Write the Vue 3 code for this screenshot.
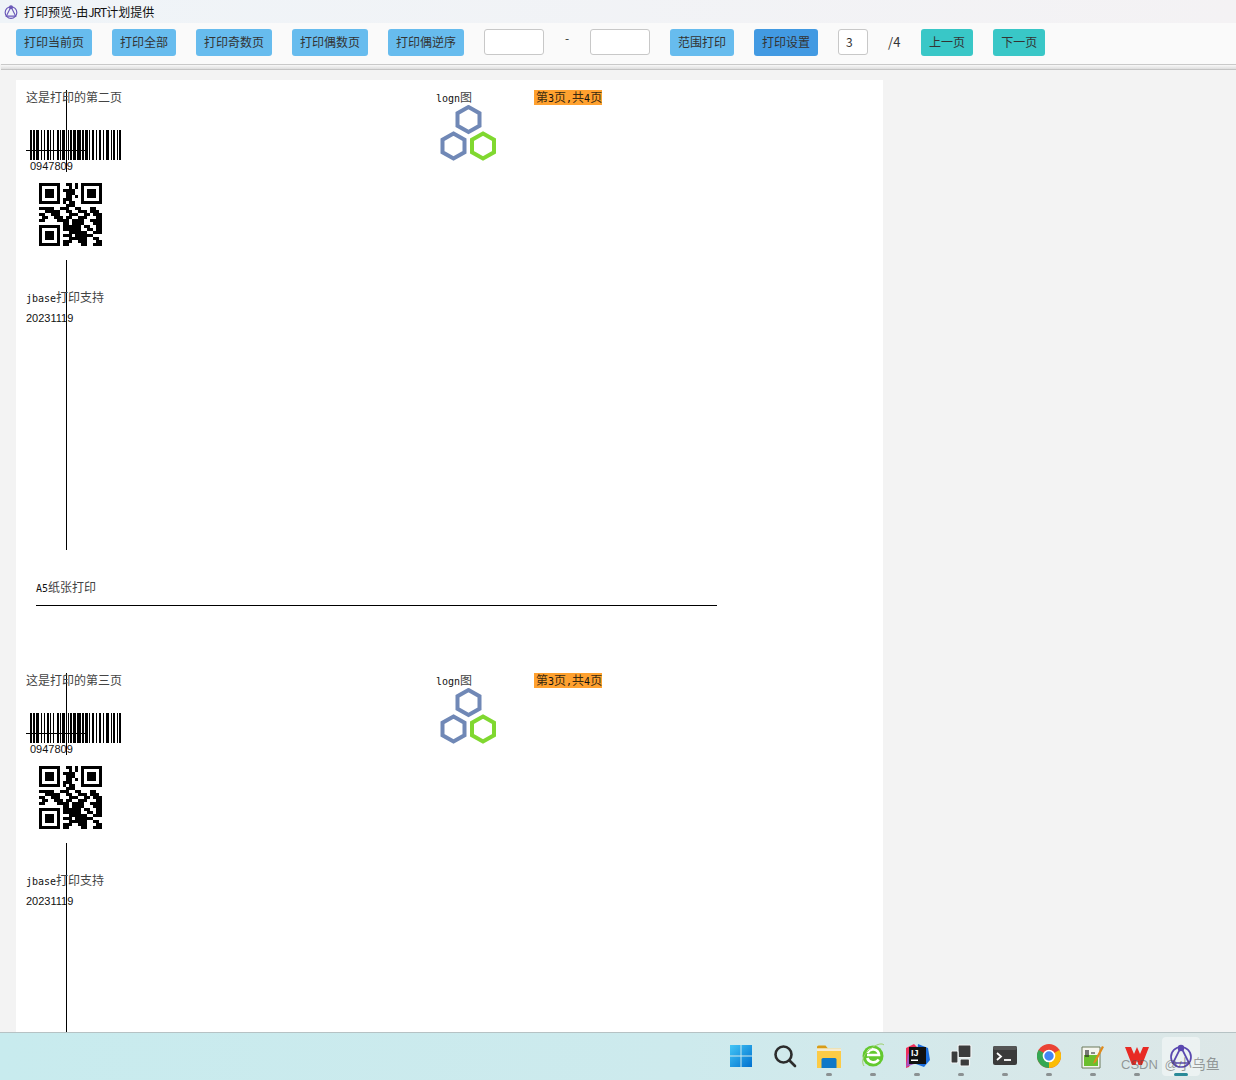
<script setup>
const sheets = [
  { title: '这是打印的第二页', footer: true },
  { title: '这是打印的第三页', footer: false }
]
const barSpec = [[30,2],[33,2],[36,3],[41,1],[44,1],[47,2],[50,1],[53,1],[57,2],[60,1],[62,3],[66,1],[68,1],[70,2],[73,3],[77,4],[82,2],[85,3],[89,1],[92,2],[96,1],[99,2],[103,1],[106,3],[111,1],[113,2],[117,1],[119,2]]
const barcode = barSpec.map(([x, w]) => `M${x - 30} 0h${w}v30h${-w}z`).join('')
const rows = [
  '111111100110101111111','100000100010101000001','101110101111001011101','101110100111001011101','101110100110101011101','100000101110001000001','111111101011001111111','000000000111000000000',
  '111110011100110001100','001111100110011101110','110011100011100110111','011001110110011100011','110000111101111001111','000000001101111000111',
  '111111101111110110011','100000101111110011011','101110100011111100111','101110101110111111000','101110100011111100110','100000101110011100011','111111101100001100111'
]
const qr = rows.map((r, y) => [...r].map((c, x) => c === '1' ? `M${x * 3} ${y * 3}h3v3h-3z` : '').join('')).join('')
const hex = (cx, cy) => {
  const rx = 11, ry = 12.5
  return `M${cx} ${cy - ry}L${cx + rx} ${cy - ry / 2}V${cy + ry / 2}L${cx} ${cy + ry}L${cx - rx} ${cy + ry / 2}V${cy - ry / 2}Z`
}
const hexes = [
  { d: hex(33.5, 14.5), c: '#7088b6' },
  { d: hex(18.5, 41), c: '#7088b6' },
  { d: hex(48, 41), c: '#80d830' }
]
</script>

<template>
  <div class="screen">
    <header class="titlebar">
      <svg class="app-icon" width="14" height="14" viewBox="0 0 24 24" fill="none" stroke="#6a58b8" stroke-width="2">
        <circle cx="12" cy="13" r="10" />
        <path d="M12 3 4 19h16Z" />
        <circle cx="12" cy="4" r="2.4" fill="#6a58b8" />
      </svg>
      <span class="title-text">打印预览-由<span class="jrt">JRT</span>计划提供</span>
    </header>

    <nav class="toolbar">
      <button class="btn">打印当前页</button>
      <button class="btn">打印全部</button>
      <button class="btn">打印奇数页</button>
      <button class="btn">打印偶数页</button>
      <button class="btn">打印偶逆序</button>
      <input class="field wide" />
      <span class="dash">-</span>
      <input class="field wide" />
      <button class="btn">范围打印</button>
      <button class="btn strong">打印设置</button>
      <input class="field num" value="3" />
      <span class="total">/4</span>
      <button class="btn teal">上一页</button>
      <button class="btn teal">下一页</button>
    </nav>
    <div class="rule"></div>

    <main class="view">
      <div class="paper">
        <section v-for="s in sheets" :key="s.title" class="sheet">
          <div class="vline"></div>
          <div class="txt head">{{ s.title }}</div>
          <svg class="barcode" width="91" height="30" viewBox="0 0 91 30" shape-rendering="crispEdges"><path :d="barcode" fill="#000" /></svg>
          <div class="hline"></div>
          <div class="code">0947809</div>
          <div class="qrbox">
            <svg width="63" height="63" viewBox="0 0 63 63" shape-rendering="crispEdges"><path :d="qr" fill="#000" /></svg>
          </div>
          <div class="txt jbase"><span class="lat">jbase</span>打印支持</div>
          <div class="date">20231119</div>
          <div class="txt logn"><span class="lat">logn</span>图</div>
          <svg class="logo" width="66" height="56" viewBox="0 0 66 56" fill="none" stroke-width="4">
            <path v-for="h in hexes" :key="h.d" :d="h.d" :stroke="h.c" />
          </svg>
          <div class="txt pageno">第<span class="lat">3</span>页<span class="lat">,</span>共<span class="lat">4</span>页</div>
          <template v-if="s.footer">
            <div class="txt paper-name"><span class="lat">A5</span>纸张打印</div>
            <div class="footline"></div>
          </template>
        </section>
      </div>
    </main>

    <footer class="taskbar">
      <div class="tb">
        <svg width="24" height="24" viewBox="0 0 24 24">
          <defs><linearGradient id="win" x1="0" y1="0" x2="1" y2="1"><stop offset="0" stop-color="#43c6f6" /><stop offset="1" stop-color="#0070cf" /></linearGradient></defs>
          <path d="M1 1h10.500v10.500H1zM12.500 1H23v10.500H12.500zM1 12.500h10.500V23H1zM12.500 12.500H23V23H12.500z" fill="url(#win)" />
        </svg>
      </div>
      <div class="tb">
        <svg width="24" height="24" viewBox="0 0 24 24" fill="none" stroke="#2c2c2c" stroke-width="2.600" stroke-linecap="round">
          <circle cx="10.500" cy="10.500" r="8" /><path d="M16.500 16.500 22 22" />
        </svg>
      </div>
      <div class="tb">
        <svg width="24" height="24" viewBox="0 0 24 24">
          <path d="M0 3a1.500 1.500 0 0 1 1.500-1.500h7L11 4.500H0Z" fill="#d99c16" />
          <path d="M0 4.500h24V24H0Z" fill="#fccb46" />
          <path d="M0 4.500h24V7H0Z" fill="#f5ead0" />
          <path d="M4.500 15.500a1.500 1.500 0 0 1 1.500-1.500h12a1.500 1.500 0 0 1 1.500 1.500V24h-15Z" fill="#0f78c8" />
        </svg>
        <i class="pill"></i>
      </div>
      <div class="tb">
        <svg width="24" height="26" viewBox="0 0 24 26" fill="none">
          <circle cx="12" cy="13" r="10.500" fill="#63c92e" />
          <path d="M6 12h12a6 6 0 0 0-11.500-2M6.200 15a6.500 6.500 0 0 0 11.500 1.500" stroke="#fff" stroke-width="2.600" />
          <path d="M3 23C0 19 2 10 12 4c5-3 9-4 11-2" stroke="#9bd06a" stroke-width="1" />
        </svg>
        <i class="pill"></i>
      </div>
      <div class="tb">
        <svg width="26" height="26" viewBox="0 0 26 26">
          <path d="M2 5 10 1l3 3-8 20-3 1Z" fill="#f0305c" />
          <path d="M14 1 24 5l2 12-6 7-8-3Z" fill="#1c6fe0" />
          <path d="M4 10 2 24l8-3Z" fill="#a850c0" />
          <rect x="5" y="4" width="17" height="17" fill="#111" />
          <text x="7" y="13" class="ij">IJ</text>
          <rect x="7" y="16.500" width="7" height="1.500" fill="#fff" />
        </svg>
        <i class="pill"></i>
      </div>
      <div class="tb">
        <svg width="22" height="24" viewBox="0 0 22 24" fill="#3c3c3c" stroke="#f2f4f4" stroke-width="1.200">
          <rect x="8" y="1" width="13" height="12.500" rx="1" />
          <rect x="1" y="7" width="7" height="12" rx="1" />
          <rect x="10" y="15" width="9.500" height="7" rx="1" />
        </svg>
        <i class="pill"></i>
      </div>
      <div class="tb">
        <svg width="24" height="20" viewBox="0 0 24 20">
          <rect width="24" height="19" rx="2" fill="#3a3a3a" />
          <rect width="24" height="4" rx="2" fill="#555" />
          <path d="M4 7l4 3.500L4 14" fill="none" stroke="#fff" stroke-width="1.800" />
          <path d="M11 14h7" stroke="#fff" stroke-width="1.800" />
        </svg>
        <i class="pill"></i>
      </div>
      <div class="tb">
        <svg width="24" height="24" viewBox="0 0 24 24">
          <circle cx="12" cy="12" r="12" fill="#ea4335" />
          <path d="M12 12 22.400 6A12 12 0 0 1 12 24Z" fill="#fbbc05" />
          <path d="M12 12 12 24A12 12 0 0 1 1.600 6Z" fill="#34a853" />
          <circle cx="12" cy="12" r="5.500" fill="#4285f4" stroke="#fff" stroke-width="1.600" />
        </svg>
        <i class="pill"></i>
      </div>
      <div class="tb">
        <svg width="24" height="25" viewBox="0 0 24 25">
          <path d="M1 3h18v21H1Z" fill="#f4f6ef" stroke="#6c7a5c" stroke-width="1" />
          <path d="M3 11h14v11H3Z" fill="#6bbf2e" />
          <path d="M5 6v7M7 6v7M10 9h4" stroke="#222" stroke-width="1.200" fill="none" />
          <path d="M21 2 13 17l-1 3 3-2L23 3Z" fill="#e08a1c" />
        </svg>
        <i class="pill"></i>
      </div>
      <div class="tb">
        <svg width="24" height="20" viewBox="0 0 24 20">
          <path d="M0 1h6l3 7 3-7 3 7 3-7h6l-7 18h-3.500L12 14l-1.500 5H7Z" fill="#e82a24" />
        </svg>
        <i class="pill"></i>
      </div>
      <div class="tb active">
        <svg width="24" height="24" viewBox="0 0 24 24" fill="none" stroke="#5a48b0" stroke-width="1.700">
          <circle cx="12" cy="13" r="10" />
          <path d="M12 3 4 19h16Z" />
          <circle cx="12" cy="4" r="2.400" fill="#5a48b0" />
        </svg>
        <i class="pill now"></i>
      </div>
      <span class="mark">CSDN @<span class="mark-cn">小乌鱼</span></span>
    </footer>
  </div>
</template>

<style scoped>
.screen {
  width: 1236px;
  height: 1080px;
  display: flex;
  flex-direction: column;
  overflow: hidden;
  background: #f3f3f3;
  font-family: "Noto Sans CJK SC", "Liberation Sans", sans-serif;
  font-size: 12px;
  color: #333;
}
.titlebar {
  height: 23px;
  flex: none;
  display: flex;
  align-items: center;
  gap: 6px;
  padding-left: 4px;
  background: linear-gradient(90deg, #eff4f8, #f4f2f4);
  color: #111;
}
.app-icon { flex: none; }
.title-text { margin-top: -1px; }
.jrt { letter-spacing: -1px; }
.toolbar {
  height: 41px;
  flex: none;
  display: flex;
  align-items: center;
  gap: 20px;
  padding: 0 0 3px 16px;
  box-sizing: border-box;
  background: #fafafa;
}
.btn {
  height: 27px;
  padding: 0 8px 2px;
  border: 0;
  border-radius: 3px;
  background: #67bcee;
  color: #333;
  font: inherit;
  white-space: nowrap;
}
.strong { background: #429ae2; }
.teal { background: #39c7c7; }
.field {
  height: 26px;
  box-sizing: border-box;
  border: 1px solid #c8c8c8;
  border-radius: 3px;
  background: #fff;
  font: inherit;
  color: #333;
  padding: 0 0 2px 7px;
}
.wide { width: 60px; }
.num { width: 30px; }
.dash { width: 6px; text-align: center; margin-top: -10px; }
.total { width: 13px; font-size: 13px; margin-top: -2px; }
.rule {
  height: 6px;
  flex: none;
  margin-left: 1px;
  box-sizing: border-box;
  border-top: 1px solid #c9c9c9;
  border-bottom: 1px solid #c4c4c4;
  background: linear-gradient(#f8f8f8, #dedede);
}
.view {
  flex: 1;
  min-height: 0;
  overflow: hidden;
  padding: 10px 353px 0 16px;
}
.paper { background: #fff; }
.sheet {
  position: relative;
  height: 583px;
  overflow: hidden;
  font-family: "Liberation Serif", "Noto Sans CJK SC", serif;
}
.sheet > * { position: absolute; }
.txt {
  font-family: "Noto Sans CJK SC", sans-serif;
  font-size: 12px;
  line-height: 14px;
  color: #444;
  white-space: nowrap;
}
.lat {
  font-family: "DejaVu Sans Mono", monospace;
  font-size: 10px;
  color: #111;
}
.vline { left: 50px; top: 10px; width: 1px; height: 460px; background: #000; }
.head { left: 10px; top: 10px; }
.barcode { left: 14px; top: 50px; }
.hline { left: 10px; top: 70px; width: 61px; height: 1px; background: #000; }
.code {
  left: 14px;
  top: 80px;
  font: 11px/13px "Liberation Sans", sans-serif;
  color: #111;
}
.qrbox {
  left: 14px;
  top: 92px;
  width: 72px;
  height: 88px;
  background: #fff;
  padding: 11px 0 0 9px;
  box-sizing: border-box;
}
.qrbox svg { display: block; }
.jbase { left: 10px; top: 210px; }
.date {
  left: 10px;
  top: 231px;
  font: 11px/14px "Liberation Sans", sans-serif;
  color: #111;
}
.logn { left: 420px; top: 10px; }
.logo { left: 419px; top: 25px; }
.pageno {
  left: 518px;
  top: 10px;
  width: 68px;
  height: 15px;
  padding-left: 2px;
  box-sizing: border-box;
  background: #ffa12f;
  color: #3a2a10;
}
.paper-name { left: 20px; top: 500px; }
.footline { left: 20px; top: 525px; width: 681px; height: 1px; background: #000; }

.taskbar {
  position: relative;
  height: 48px;
  flex: none;
  box-sizing: border-box;
  display: flex;
  justify-content: flex-end;
  padding-right: 33px;
  border-top: 1px solid #b6c2c4;
  background: linear-gradient(90deg, #c8ebee, #cdeaed 55%, #dde7e7);
}
.tb {
  position: relative;
  width: 44px;
  display: flex;
  align-items: center;
  justify-content: center;
}
.tb svg { display: block; margin-top: -1px; }
.active::before {
  content: "";
  position: absolute;
  left: 3px;
  right: 3px;
  top: 4px;
  bottom: 4px;
  border-radius: 4px;
  background: rgba(255, 255, 255, 0.45);
}
.active svg { position: relative; }
.pill {
  position: absolute;
  left: 19px;
  bottom: 4px;
  width: 6px;
  height: 3px;
  border-radius: 2px;
  background: #8b9192;
}
.now { left: 15px; width: 14px; background: #2a8a98; }
.ij { font: bold 9px "Liberation Sans", sans-serif; fill: #fff; }
.mark {
  position: absolute;
  left: 1121px;
  top: 22px;
  font: 13px/18px "Liberation Sans", "Noto Sans CJK SC", sans-serif;
  word-spacing: 3px;
  color: rgba(80, 80, 80, 0.55);
  white-space: nowrap;
}
.mark-cn { font-size: 14px; }
</style>
